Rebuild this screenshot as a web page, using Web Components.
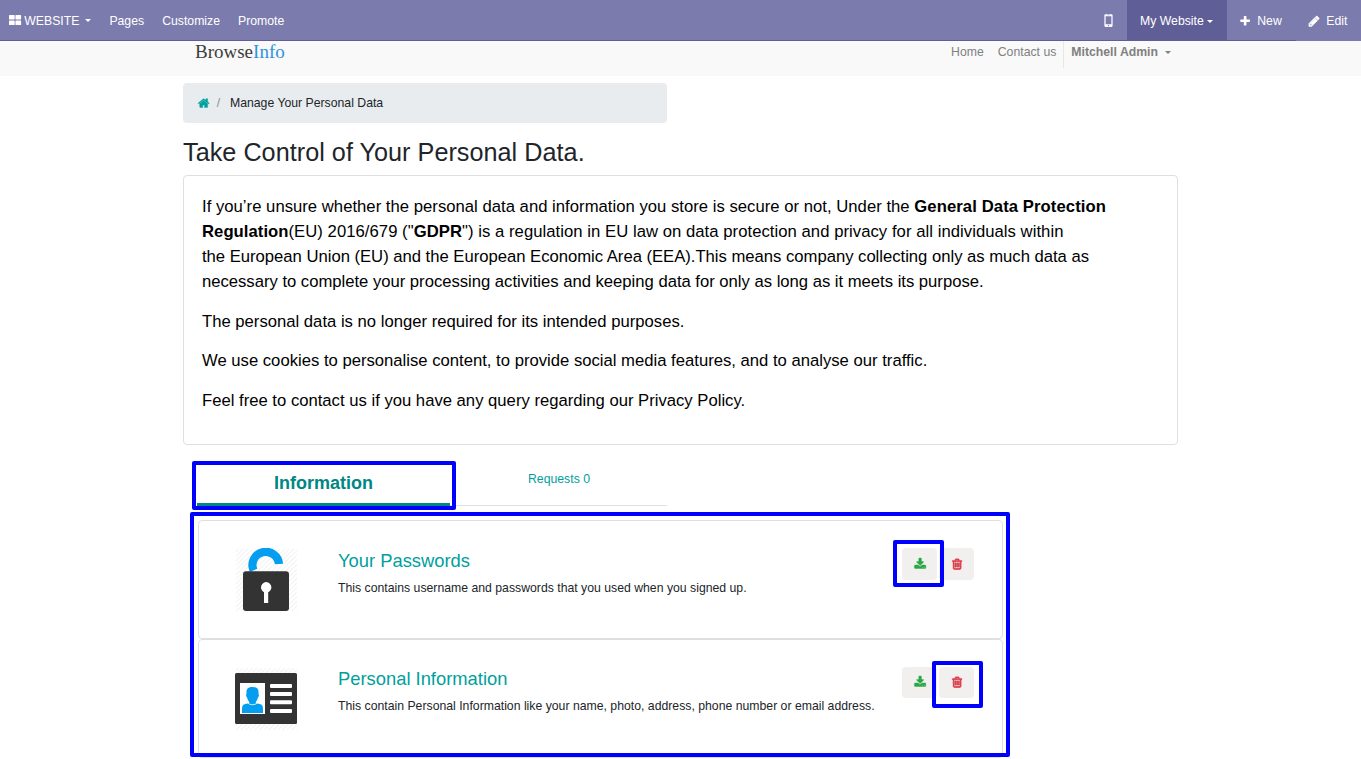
<!DOCTYPE html>
<html lang="en">
<head>
<meta charset="utf-8">
<title>Manage Your Personal Data</title>
<style>
html,body{margin:0;height:759px;overflow:hidden;background:#fff}
body{font:12.25px/18px "Liberation Sans",Arial,sans-serif;color:#212529}
b{font-weight:700}
</style>
</head>
<body>
<gdpr-page></gdpr-page>
<script>
const ICONS={
home:'M1408 992v480q0 26-19 45t-45 19h-384v-384h-256v384h-384q-26 0-45-19t-19-45v-480q0-1 .5-3t.5-3l575-474 575 474q1 2 1 6zm223-69l-62 74q-8 9-21 11h-3q-13 0-21-7l-692-577-692 577q-12 8-24 7-13-2-21-11l-62-74q-8-10-7-23.5t11-21.5l719-599q32-26 76-26t76 26l244 204v-195q0-14 9-23t23-9h192q14 0 23 9t9 23v408l219 182q10 8 11 21.5t-7 23.5z',
plus:'M1600 736v192q0 40-28 68t-68 28h-416v416q0 40-28 68t-68 28h-192q-40 0-68-28t-28-68v-416h-416q-40 0-68-28t-28-68v-192q0-40 28-68t68-28h416v-416q0-40 28-68t68-28h192q40 0 68 28t28 68v416h416q40 0 68 28t28 68z',
pencil:'M491 1536l91-91-235-235-91 91v107h128v128h107zm523-928q0-22-22-22-10 0-17 7l-542 542q-7 7-7 17 0 22 22 22 10 0 17-7l542-542q7-7 7-17zm-54-192l416 416-832 832h-416v-416zm683 96q0 53-37 90l-166 166-416-416 166-165q36-38 90-38 53 0 91 38l235 234q37 39 37 91z',
download:'M1344 1344q0-26-19-45t-45-19-45 19-19 45 19 45 45 19 45-19 19-45zm256 0q0-26-19-45t-45-19-45 19-19 45 19 45 45 19 45-19 19-45zm128-224v320q0 40-28 68t-68 28h-1472q-40 0-68-28t-28-68v-320q0-40 28-68t68-28h465l135 136q58 56 136 56t136-56l136-136h464q40 0 68 28t28 68zm-325-569q17 41-14 70l-448 448q-18 19-45 19t-45-19l-448-448q-31-29-14-70 17-39 59-39h256v-448q0-26 19-45t45-19h256q26 0 45 19t19 45v448h256q42 0 59 39z',
trash:'M704 736v576q0 14-9 23t-23 9h-64q-14 0-23-9t-9-23v-576q0-14 9-23t23-9h64q14 0 23 9t9 23zm256 0v576q0 14-9 23t-23 9h-64q-14 0-23-9t-9-23v-576q0-14 9-23t23-9h64q14 0 23 9t9 23zm256 0v576q0 14-9 23t-23 9h-64q-14 0-23-9t-9-23v-576q0-14 9-23t23-9h64q14 0 23 9t9 23zm128 724v-948h-896v948q0 22 7 40.5t14.5 27 10.5 8.5h832q3 0 10.5-8.5t14.5-27 7-40.5zm-672-1076h448l-48-117q-7-9-17-11h-317q-10 2-17 11zm928 32v64q0 14-9 23t-23 9h-96v948q0 83-47 143.5t-113 60.5h-832q-66 0-113-58.5t-47-141.5v-952h-96q-14 0-23-9t-9-23v-64q0-14 9-23t23-9h309l70-167q15-37 54-63t79-26h320q40 0 79 26t54 63l70 167h309q14 0 23 9t9 23z',
grid:'M0 240q0-90 90-90h650q90 0 90 90v480q0 90-90 90h-650q-90 0-90-90zM940 240q0-90 90-90h650q90 0 90 90v480q0 90-90 90h-650q-90 0-90-90zM0 1050q0-90 90-90h650q90 0 90 90v480q0 90-90 90h-650q-90 0-90-90zM940 1050q0-90 90-90h650q90 0 90 90v480q0 90-90 90h-650q-90 0-90-90z',
mobile:'M330 180q0-160 160-160h812q160 0 160 160v1440q0 160-160 160h-812q-160 0-160-160zM500 300v1130h792v-1130zM770 100v80h252v-80zM896 1520a90 90 0 1 0 .1 0z'
};
function define(name,html){
  customElements.define(name,class extends HTMLElement{
    constructor(){super();this.attachShadow({mode:'open'})}
    connectedCallback(){
      this.shadowRoot.innerHTML=typeof html==='function'?html(this):html;
    }
  });
}
define('fa-icon',el=>{
  const s=el.getAttribute('size')||12.25;
  return `<style>:host{display:block;flex:none;width:${s}px;height:${s}px}svg{display:block;overflow:visible}path{stroke:currentColor;stroke-width:${el.getAttribute('weight')||0}}</style>
  <svg width="${s}" height="${s}" viewBox="0 0 1792 1792" fill="currentColor" fill-rule="evenodd"><path d="${ICONS[el.getAttribute('name')]}"/></svg>`});
define('drop-caret',`<style>:host{display:block;width:0;height:0;border:3px solid transparent;border-top-color:currentColor;border-bottom:0}</style>`);
define('call-out',`<style>:host{display:block;position:absolute;box-sizing:border-box;border:4px solid #00f;border-radius:2px;pointer-events:none}</style>`);
define('admin-bar',`<style>
:host{display:flex;height:41px;background:#7c7bad;color:#fff;line-height:40px}
.left,.right{display:flex}
.left{padding-left:9px;flex:1;border-bottom:1px solid #5f5e97}
.item{display:flex;align-items:center;height:40px;box-sizing:border-box;padding-top:1px}
.brand fa-icon{margin:0 3px 0 0}.brand drop-caret{margin-left:6px}
.left .item+.item{margin-left:18px}
.right .item{height:41px}
.phone{width:37px;padding-left:12px;border-bottom:1px solid #5f5e97}
.site{width:100px;background:#5f5e97;padding-left:13px}.site drop-caret{margin-left:3.5px}
.new{width:69px;padding-left:12px;border-bottom:1px solid #5f5e97}.new fa-icon{margin:1px 6px 0 0}
.edit{width:65px;padding-left:12px}.edit fa-icon{margin-right:6px}
</style>
<div class="left"><div class="item brand"><fa-icon name="grid"></fa-icon>WEBSITE<drop-caret></drop-caret></div><div class="item">Pages</div><div class="item">Customize</div><div class="item">Promote</div></div>
<div class="right"><div class="item phone"><fa-icon name="mobile" size="13"></fa-icon></div><div class="item site">My Website<drop-caret></drop-caret></div><div class="item new"><fa-icon name="plus"></fa-icon>New</div><div class="item edit"><fa-icon name="pencil" weight="70"></fa-icon>Edit</div></div>`);
define('site-header',`<style>
:host{display:flex;height:35px;background:#f9f9f9;color:#808080;padding:0 190px 0 195px;box-sizing:border-box}
.logo{font:19px/21px "Liberation Serif",serif;color:#3d3d3d;flex:1}.logo span{color:#2e93dd}
nav{display:flex;line-height:22px}
nav>span{margin-right:14px}
nav>.last{margin-right:7px}
.user{display:flex;align-items:center;height:27px;border-left:1px solid #e7e7e7;padding-left:7px}
.user b{line-height:22px;height:27px}.user drop-caret{margin:-5px 0 0 7px}
</style><div class="logo">Browse<span>Info</span></div><nav><span>Home</span><span class="last">Contact us</span><div class="user"><b>Mitchell Admin</b><drop-caret></drop-caret></div></nav>`);
define('bread-crumb',`<style>
:host{display:flex;align-items:center;width:484px;height:40px;box-sizing:border-box;padding-left:15px;background:#e9ecef;border-radius:4px}
fa-icon{color:#00a09d}i{font-style:normal;color:#868e96;margin:0 9.8px 0 6.5px}
</style><fa-icon name="home" weight="60"></fa-icon><i>/</i><slot></slot>`);
define('policy-card',`<style>
:host{display:block;box-sizing:border-box;width:995px;height:270px;border:1px solid #dfdfdf;border-radius:4px;padding:18px 18px 0;color:#000;font-size:16.67px;line-height:25px;white-space:nowrap}
::slotted(p){margin:0 0 14.6px}
</style><slot></slot>`);
define('tab-strip',`<style>
:host{display:flex;width:470px;height:45px;margin-left:14px;text-align:center;box-sizing:border-box}
.on{width:253px;font:bold 18px/44px "Liberation Sans",Arial,sans-serif;color:#008784;box-sizing:border-box;height:45px;border-bottom:3px solid #008784}
.off{flex:1;line-height:37px;padding-left:1px;color:#00a09d;border-bottom:1px solid #dee2e6;height:44px}
</style><div class="on">Information</div><div class="off">Requests 0</div>`);
define('action-button',el=>`<style>
:host{display:flex;align-items:center;justify-content:center;box-sizing:border-box;padding-left:1px;width:35px;height:var(--button-height,32px);border-radius:4px;background:#f2f0ef;color:${el.getAttribute('tone')}}
</style><fa-icon name="${el.getAttribute('icon')}" weight="${el.getAttribute('icon')==='trash'?100:60}"></fa-icon>`);
define('data-art',el=>{
  const h='<defs><pattern id="h" width="4.6" height="4.6" patternUnits="userSpaceOnUse"><path d="M0 4.6L4.6 0" stroke="#e4e4e4" stroke-width=".7"/></pattern></defs><rect x="1" y="1" width="61" height="62" fill="url(#h)"/>';
  const lock='<path d="M18.500 22.300A13.300 13.300 0 1 1 44 16" fill="none" stroke="#039ef0" stroke-width="8.200"/><rect x="8" y="23.300" width="46" height="39.700" rx="3" fill="#333"/><path d="M29 55V44.200Q26 42.500 26 39.300A5.200 5.200 0 0 1 36.400 39.300Q36.400 42.500 33.200 44.200V55Z" fill="#fff"/>';
  const card='<rect x="0" y="6" width="62" height="51" rx="1.500" fill="#333"/><rect x="5" y="16" width="25" height="31" fill="#fff"/><path d="M17.500 20C22 20 24 22 23.500 26.500Q24.500 29 23 30.500Q22 34 20.800 35V36L25.500 37.200Q28 38 28 42V46H7V42Q7 38 9.500 37.200L14.200 36V35Q13 34 12 30.500Q10.500 29 11.500 26.500C11 22 13 20 17.500 20Z" fill="#039ef0"/><path d="M12.500 36Q17.500 39.500 22.500 36" fill="none" stroke="#fff" stroke-width=".8"/><g fill="#fff"><rect x="35" y="17" width="22" height="4" rx="1"/><rect x="35" y="25" width="22" height="4" rx="1"/><rect x="35" y="33.300" width="22" height="4" rx="1"/><rect x="35" y="42" width="22" height="4" rx="1"/></g>';
  return `<style>:host{display:block;width:64px;height:64px}svg{display:block}</style><svg width="64" height="64">${h}${el.getAttribute('kind')==='lock'?lock:card}</svg>`});
define('data-row',el=>`<style>
:host{display:flex;box-sizing:border-box;width:805px;height:119px;border:1px solid #dfdfdf;border-radius:4px;padding:27px 28px 0 36px}
.text{margin-left:39px;flex:1}
h4{margin:var(--heading-top,2px) 0 7px;font-weight:400;font-size:18.375px;line-height:22px;color:#00a09d}
p{margin:0;line-height:18px}
.buttons{display:flex;gap:2px}
</style><data-art kind="${el.getAttribute('kind')}"></data-art>
<div class="text"><h4>${el.getAttribute('heading')}</h4><p><slot></slot></p></div>
<div class="buttons"><action-button icon="download" tone="#28a745"></action-button><action-button icon="trash" tone="#dc3545"></action-button></div>`);
define('gdpr-page',`<style>
:host{display:block;position:relative;width:1361px;height:759px;overflow:hidden}
main{margin-left:183px;padding-top:7px}
h3{margin:14px 0 8px;font-weight:400;font-size:25.2px;line-height:30px;letter-spacing:.035px}
tab-strip{margin-top:16px}
.rows{margin:14px 0 0 15px}
.rows data-row+data-row{--heading-top:1px;--button-height:31px}
.l1{letter-spacing:.022px}.l1 b{letter-spacing:.09px}
.l2{letter-spacing:.046px}.l3,.l4{letter-spacing:-.016px}
</style>
<admin-bar></admin-bar><site-header></site-header>
<main>
<bread-crumb>Manage Your Personal Data</bread-crumb>
<h3>Take Control of Your Personal Data.</h3>
<policy-card>
<p><span class="l1">If you’re unsure whether the personal data and information you store is secure or not, Under the <b>General Data Protection</b></span><br><span class="l2"><b>Regulation</b>(EU) 2016/679 ("<b>GDPR</b>") is a regulation in EU law on data protection and privacy for all individuals within</span><br><span class="l3">the European Union (EU) and the European Economic Area (EEA).This means company collecting only as much data as</span><br><span class="l4">necessary to complete your processing activities and keeping data for only as long as it meets its purpose.</span></p>
<p>The personal data is no longer required for its intended purposes.</p>
<p>We use cookies to personalise content, to provide social media features, and to analyse our traffic.</p>
<p>Feel free to contact us if you have any query regarding our Privacy Policy.</p>
</policy-card>
<tab-strip></tab-strip>
<div class="rows">
<data-row kind="lock" heading="Your Passwords">This contains username and passwords that you used when you signed up.</data-row>
<data-row kind="card" heading="Personal Information">This contain Personal Information like your name, photo, address, phone number or email address.</data-row>
</div>
</main>
<call-out style="left:192px;top:461px;width:264px;height:49px"></call-out>
<call-out style="left:190px;top:512px;width:820px;height:245px"></call-out>
<call-out style="left:893px;top:540px;width:51px;height:47px"></call-out>
<call-out style="left:932px;top:661px;width:51px;height:47px"></call-out>`);
</script>
</body>
</html>
